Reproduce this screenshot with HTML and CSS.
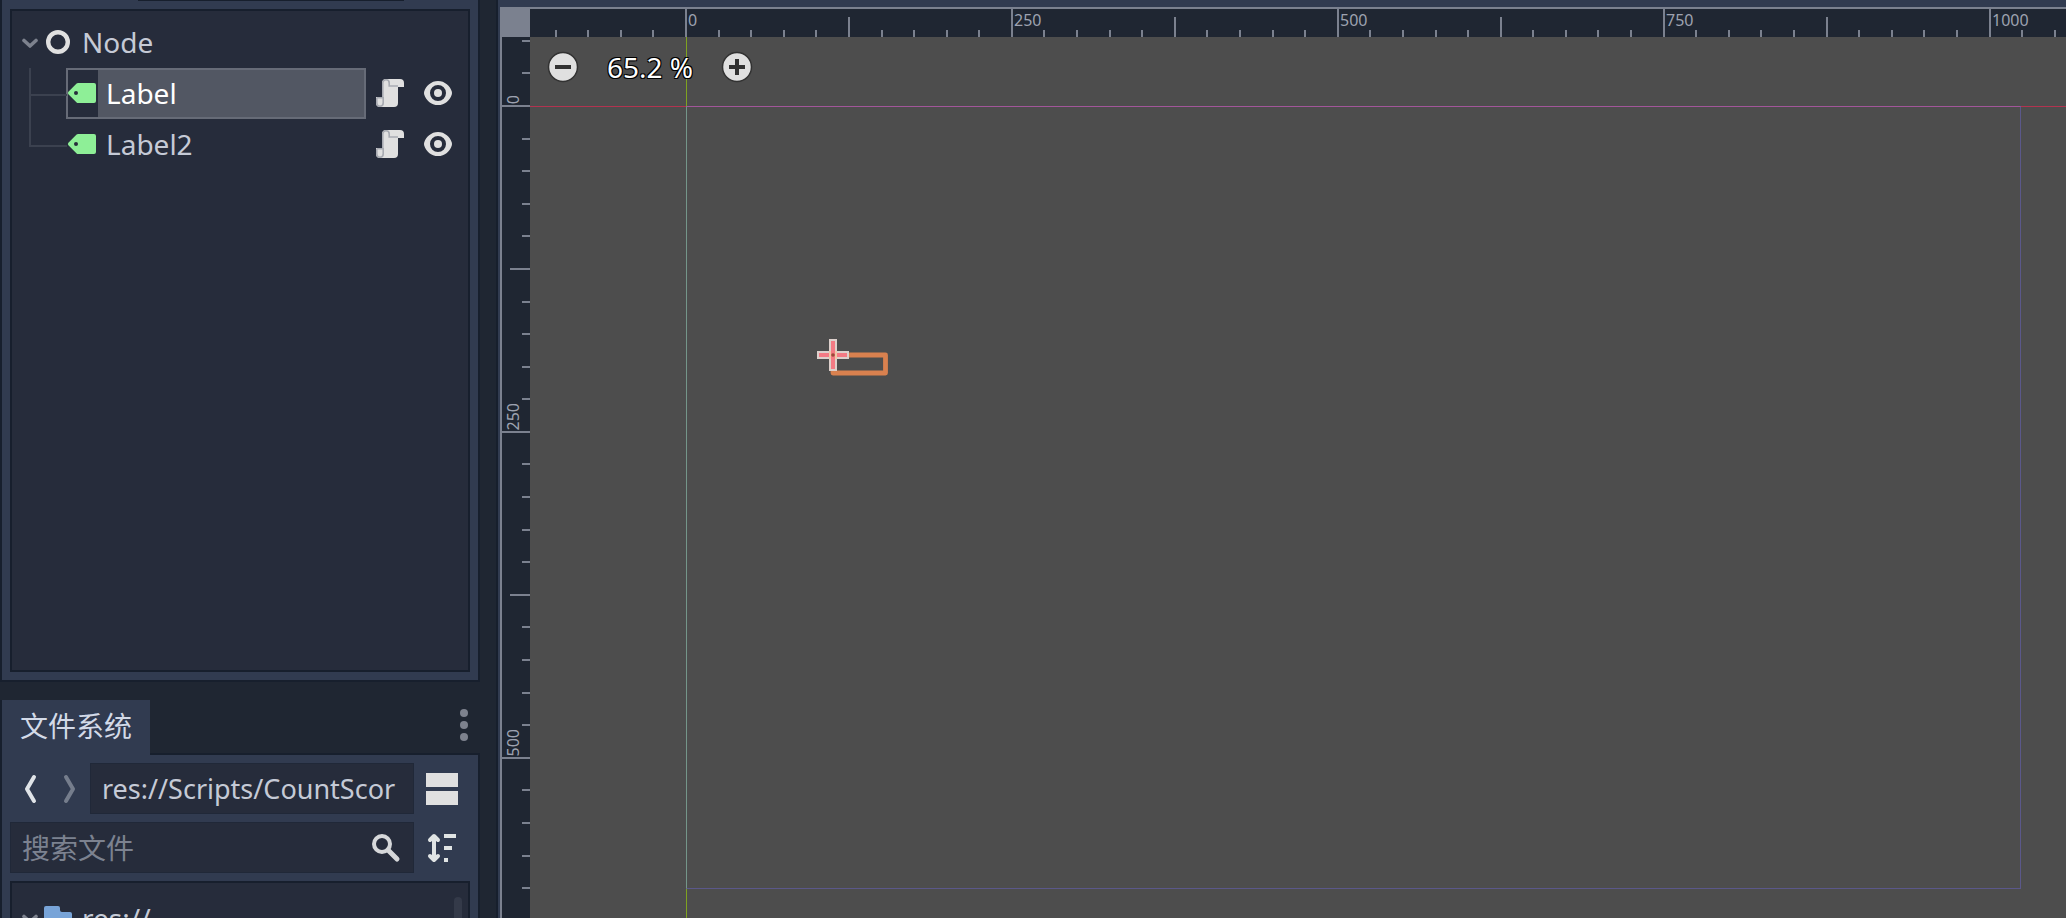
FILE: index.html
```html
<!DOCTYPE html>
<html lang="zh-CN">
<head>
<meta charset="utf-8">
<title>Scene editor</title>
<link rel="stylesheet" href="styles.css">
</head>
<body>
<svg class="defs" width="0" height="0" aria-hidden="true">
  <symbol id="chevron" viewBox="0 0 16 16"><path d="M2 5.500 8 11l6-5.500" fill="none" stroke="currentColor" stroke-width="3.600" stroke-linecap="round" stroke-linejoin="round"/></symbol>
  <symbol id="node" viewBox="0 0 16 16"><circle cx="8" cy="8" r="4.900" fill="none" stroke="#e0e0e0" stroke-width="2.200"/></symbol>
  <symbol id="label" viewBox="0 0 16 16"><path fill="#8eef97" fill-rule="evenodd" d="M6 3a1 1 0 0 0-.7.300L1.200 7.400a.9.900 0 0 0 0 1.200l4.100 4.100a1 1 0 0 0 .7.300h8a1 1 0 0 0 1-1V4a1 1 0 0 0-1-1zM5 7a1 1 0 1 1 0 2 1 1 0 0 1 0-2z"/></symbol>
  <symbol id="script" viewBox="0 0 16 16">
    <path fill="#e0e0e0" d="M6 1a2 2 0 0 0-2 2v7H1v3a2 2 0 0 0 2 2h7a2 2 0 0 0 2-2V5h3V3a2 2 0 0 0-2-2z"/>
    <path fill="none" stroke="#a8abb2" stroke-width=".8" d="M6 1.400a1.600 1.600 0 0 0-1.600 1.600v7M1.400 10.400v2.600a1.600 1.600 0 0 0 3.200 0v-3M1.400 10.400h3M6 1.400a1.600 1.600 0 0 1 1.600 1.600v1.500H12"/>
  </symbol>
  <symbol id="eye" viewBox="0 0 16 16"><path fill="#e0e0e0" fill-rule="evenodd" d="M8 2C4.600 2 1.900 4.500 1.100 7.300a2.500 2.500 0 0 0 0 1.400C1.900 11.500 4.600 14 8 14s6.100-2.500 6.900-5.300a2.500 2.500 0 0 0 0-1.400C14.100 4.500 11.400 2 8 2zm0 2a4 4 0 1 1 0 8 4 4 0 0 1 0-8z"/><circle cx="8" cy="8" r="2" fill="#e0e0e0"/></symbol>
  <symbol id="folder" viewBox="0 0 16 16"><path fill="#78a4d8" d="M2 2a1 1 0 0 0-1 1v10a1 1 0 0 0 1 1h12a1 1 0 0 0 1-1V6a1 1 0 0 0-1-1h-4a1 1 0 0 1-1-1V3a1 1 0 0 0-1-1z"/></symbol>
</svg>

<div class="editor">
  <aside class="docks">
    <section class="dock scene-dock" aria-label="Scene">
      <div class="dock-edge"></div>
      <div class="tree">
        <div class="tree-row">
          <button class="fold" aria-label="Collapse"><svg class="icon-fold"><use href="#chevron"/></svg></button>
          <svg class="icon"><use href="#node"/></svg>
          <span class="tree-name">Node</span>
        </div>
        <div class="tree-row child">
          <div class="item selected"><svg class="icon"><use href="#label"/></svg><span class="item-name">Label</span></div>
          <button class="row-button" aria-label="Open script"><svg class="icon"><use href="#script"/></svg></button>
          <button class="row-button" aria-label="Toggle visibility"><svg class="icon"><use href="#eye"/></svg></button>
        </div>
        <div class="tree-row child last">
          <div class="item"><svg class="icon"><use href="#label"/></svg><span class="item-name">Label2</span></div>
          <button class="row-button" aria-label="Open script"><svg class="icon"><use href="#script"/></svg></button>
          <button class="row-button" aria-label="Toggle visibility"><svg class="icon"><use href="#eye"/></svg></button>
        </div>
      </div>
    </section>

    <div class="tab-bar">
      <button class="tab">文件系统</button>
      <button class="menu-button" aria-label="Dock menu">
        <svg width="8" height="32" viewBox="0 0 8 32" fill="#7d828e"><circle cx="4" cy="4" r="4"/><circle cx="4" cy="16" r="4"/><circle cx="4" cy="28" r="4"/></svg>
      </button>
    </div>

    <section class="dock files-dock" aria-label="文件系统">
      <div class="tool-row">
        <div class="history">
          <button class="arrow" aria-label="Back"><svg width="16" height="32" viewBox="0 0 16 32"><path d="M12 4 5 16l7 12" fill="none" stroke="#e0e4e8" stroke-width="4" stroke-linecap="round" stroke-linejoin="round"/></svg></button>
          <button class="arrow" aria-label="Forward"><svg width="16" height="32" viewBox="0 0 16 32"><path d="m4 4 7 12-7 12" fill="none" stroke="#757d8c" stroke-width="4" stroke-linecap="round" stroke-linejoin="round"/></svg></button>
        </div>
        <input class="field path" type="text" aria-label="Path" value="res://Scripts/CountScor">
        <button class="side-button" aria-label="Split view"><svg width="32" height="32" viewBox="0 0 32 32" fill="#e0e0e0"><path d="M0 0h32v14H0zM0 18h32v14H0z"/></svg></button>
      </div>
      <div class="tool-row">
        <label class="field search">
          <input class="search-input" type="text" aria-label="搜索文件" placeholder="搜索文件">
          <svg width="32" height="32" viewBox="0 0 32 32" fill="none" stroke="#d6d8da"><circle cx="12" cy="12" r="8" stroke-width="4"/><path d="m18 18 9 9" stroke-width="5" stroke-linecap="round"/></svg>
        </label>
        <button class="side-button" aria-label="Sort files"><svg width="32" height="32" viewBox="0 0 32 32"><path d="M8 5v22M4 8l4-4 4 4M4 24l4 4 4-4" fill="none" stroke="#e0e4e4" stroke-width="4" stroke-linecap="round" stroke-linejoin="round"/><path d="M18 2h12v4H18zM18 14h8v4h-8zM18 26h4v4h-4z" fill="#e0e4e4"/></svg></button>
      </div>
      <div class="tree file-tree">
        <div class="tree-row">
          <button class="fold" aria-label="Collapse"><svg class="icon-fold"><use href="#chevron"/></svg></button>
          <svg class="icon"><use href="#folder"/></svg>
          <span class="tree-name">res://</span>
        </div>
        <div class="scroll-thumb"></div>
      </div>
    </section>
  </aside>

  <main class="viewport">
    <div class="ruler-corner"></div>
    <div class="ruler ruler-x" id="ruler-x"></div>
    <div class="ruler ruler-y" id="ruler-y"></div>
    <div class="stage">
      <div class="axis axis-x"></div>
      <div class="axis axis-y"></div>
      <div class="frame"></div>
      <svg class="gizmo" width="76" height="40" viewBox="0 0 76 40">
        <rect x="18" y="18" width="52.500" height="18" fill="none" stroke="#d9814f" stroke-width="4.800" stroke-linejoin="round"/>
        <path d="M15 3h6v12h12v6H21v12h-6V21H3v-6h12z" fill="#f47a84" stroke="#ddd0cc" stroke-width="2"/>
        <path d="M15 14v8M21 14v8" stroke="#f0c8a8" stroke-width="2"/>
        <circle cx="18" cy="18" r="1.800" fill="#9c4a38"/>
      </svg>
      <div class="zoom-bar">
        <button class="zoom-button" aria-label="Zoom out"><svg width="32" height="32" viewBox="0 0 32 32"><circle cx="16" cy="16" r="14.500" fill="#e0e0e0" stroke="#323232" stroke-width="1.500"/><path d="M8 16h16" stroke="#323232" stroke-width="4"/></svg></button>
        <button class="zoom-value">65.2 %</button>
        <button class="zoom-button" aria-label="Zoom in"><svg width="32" height="32" viewBox="0 0 32 32"><circle cx="16" cy="16" r="14.500" fill="#e0e0e0" stroke="#323232" stroke-width="1.500"/><path d="M8 16h16M16 8v16" stroke="#323232" stroke-width="4"/></svg></button>
      </div>
    </div>
  </main>
</div>
<script src="rulers.js"></script>
</body>
</html>
```
FILE: rulers.js
```js
// Draws the tick marks of both rulers: one tick per 25 units, a number every 250.
const PIXELS_PER_UNIT = 1.3035;
const STEP = 25;

function drawRuler(id, side, origin) {
  const ruler = document.getElementById(id);
  const length = side === 'left' ? ruler.clientWidth : ruler.clientHeight;
  const spacing = STEP * PIXELS_PER_UNIT;
  ruler.textContent = '';
  for (let i = Math.ceil(-origin / spacing); origin + i * spacing < length; i++) {
    const tick = document.createElement('span');
    tick.className = 'tick';
    if (i % 10 === 0) {
      tick.classList.add('major');
      const number = document.createElement('span');
      number.className = 'number';
      number.textContent = i * STEP;
      tick.append(number);
    } else if (i % 5 === 0) {
      tick.classList.add('middle');
    }
    tick.style[side] = Math.round(origin + i * spacing) - 1 + 'px';
    ruler.append(tick);
  }
}

function drawRulers() {
  drawRuler('ruler-x', 'left', 156);
  drawRuler('ruler-y', 'top', 69);
}

drawRulers();
window.addEventListener('resize', drawRulers);
```
FILE: styles.css
```css
:root {
  --base: #313b50;
  --well: #262c3b;
  --back: #1f2632;
  --line: #171f2d;
  --text: #c5cad6;
  --rule: #7b818f;
}

* { box-sizing: border-box; }

body {
  margin: 0;
  background: var(--back);
  color: var(--text);
  font: 28px/38px "Noto Sans", "Noto Sans CJK SC", sans-serif;
}

button {
  padding: 0;
  border: 0;
  background: none;
  color: inherit;
  font: inherit;
}

input { font: inherit; color: inherit; }
svg { display: block; flex: none; }
.defs { position: absolute; }

.editor {
  display: grid;
  grid-template-columns: 480px minmax(0, 1fr);
  column-gap: 16px;
  height: 100vh;
  overflow: hidden;
}

/* Docks */
.docks {
  display: grid;
  grid-template-rows: 682px 73px minmax(0, 1fr);
  grid-template-columns: minmax(0, 1fr);
  min-height: 0;
}

.dock {
  display: flex;
  flex-direction: column;
  min-height: 0;
  padding: 8px;
  border: 2px solid var(--line);
  background: var(--base);
}

.scene-dock { border-top: 0; padding-top: 0; }
.dock-edge { height: 1px; margin: 0 66px 8px 128px; background: var(--line); }
.files-dock { gap: 8px; border-top: 0; border-bottom: 0; padding-bottom: 0; }

.tree {
  position: relative;
  flex: 1;
  min-height: 0;
  padding: 6px 10px;
  border: 2px solid var(--line);
  background: var(--well);
  overflow: hidden;
}

.tree-row {
  display: flex;
  align-items: center;
  height: 51px;
}

.fold {
  width: 16px;
  margin-right: 4px;
  color: #7d828e;
}

.icon-fold { width: 16px; height: 16px; }
.icon { width: 32px; height: 32px; margin-bottom: 2px; }
.tree-name { margin-left: 8px; padding-bottom: 2px; }

.child {
  position: relative;
  padding-left: 44px;
}

.child::before {
  content: "";
  position: absolute;
  top: 0;
  left: 7px;
  width: 36px;
  height: 26px;
  border: solid #3b414f;
  border-width: 0 0 2px 2px;
}

.child:not(.last)::after {
  content: "";
  position: absolute;
  top: 24px;
  bottom: 0;
  left: 7px;
  width: 2px;
  background: #3b414f;
}

.item {
  display: flex;
  flex: 1;
  align-items: center;
  height: 51px;
  margin-right: 8px;
}

.item-name {
  flex: 1;
  padding: 4px 8px;
  line-height: 39px;
}

.selected { box-shadow: inset 0 0 0 2px #666b77; color: #fff; }
.selected .item-name { height: 47px; margin-right: 2px; background: #525763; }
.row-button + .row-button { margin: 0 4px 0 16px; }

.tab-bar {
  display: flex;
  align-items: stretch;
  justify-content: space-between;
  padding-top: 18px;
  box-shadow: inset 0 -2px var(--line);
}

.tab {
  padding: 0 18px 4px;
  border-left: 2px solid var(--line);
  background: var(--base);
  color: #d3dae8;
}

.menu-button { padding: 0 12px 6px; }

.tool-row {
  display: flex;
  align-items: center;
  height: 51px;
}

.history {
  display: flex;
  justify-content: space-between;
  width: 80px;
  padding: 0 12px;
}

.field {
  flex: 1;
  min-width: 0;
  height: 51px;
  padding: 0 11px;
  border: 1px solid #202838;
  background: var(--well);
}

.path { font-size: 27px; }

.search {
  display: flex;
  align-items: center;
}

.search-input {
  flex: 1;
  min-width: 0;
  padding: 0;
  border: 0;
  background: none;
}

.search-input::placeholder { color: #7c8290; opacity: 1; }

.side-button { margin: 0 12px; }

.file-tree { border-bottom: 0; padding-top: 10px; padding-bottom: 0; }

.scroll-thumb {
  position: absolute;
  top: 14px;
  right: 6px;
  bottom: 0;
  width: 8px;
  border-radius: 4px 4px 0 0;
  background: #343a49;
}

/* Canvas with rulers */
.viewport {
  display: grid;
  grid-template: 30px minmax(0, 1fr) / 30px minmax(0, 1fr);
  min-height: 0;
  padding: 7px 0 0 2px;
  border-left: 2px solid var(--line);
  background: var(--base);
}

.ruler-corner { background: var(--rule); }

.ruler {
  position: relative;
  background: var(--back);
  overflow: hidden;
}

.ruler-x { border-top: 2px solid var(--rule); }
.ruler-y { border-left: 2px solid var(--rule); }

.tick {
  position: absolute;
  background: var(--rule);
}

.ruler-x .tick { bottom: 0; width: 2px; height: 7px; }
.ruler-x .middle { height: 20px; }
.ruler-x .major { height: 28px; }
.ruler-y .tick { right: 0; height: 2px; width: 8px; }
.ruler-y .middle { width: 20px; }
.ruler-y .major { width: 28px; }

.number {
  position: absolute;
  color: #9da2b0;
  font-size: 16px;
  line-height: 22px;
}

.ruler-x .number { top: 0; left: 3px; }

.ruler-y .number {
  bottom: 3px;
  left: 0;
  writing-mode: vertical-rl;
  transform: rotate(180deg);
}

.stage {
  position: relative;
  background: #4d4d4d;
  overflow: hidden;
}

.axis { position: absolute; }
.axis-x { top: 69px; left: 0; right: 0; height: 1px; background: #b23350; }
.axis-y { top: 0; bottom: 0; left: 156px; width: 1px; background: #7fa320; }

.frame {
  position: absolute;
  top: 69px;
  left: 156px;
  width: 1335px;
  height: 783px;
  border: 1px solid #5b588a;
  border-top-color: #a2569a;
  border-left-color: #74968a;
}

.gizmo {
  position: absolute;
  top: 300px;
  left: 285px;
}

.zoom-bar {
  position: absolute;
  top: 11px;
  left: 17px;
  display: flex;
  align-items: center;
  gap: 28px;
}

.zoom-value {
  color: #fff;
  text-shadow: 1px 1px #000, -1px -1px #000, 1px -1px #000, -1px 1px #000;
}
```
